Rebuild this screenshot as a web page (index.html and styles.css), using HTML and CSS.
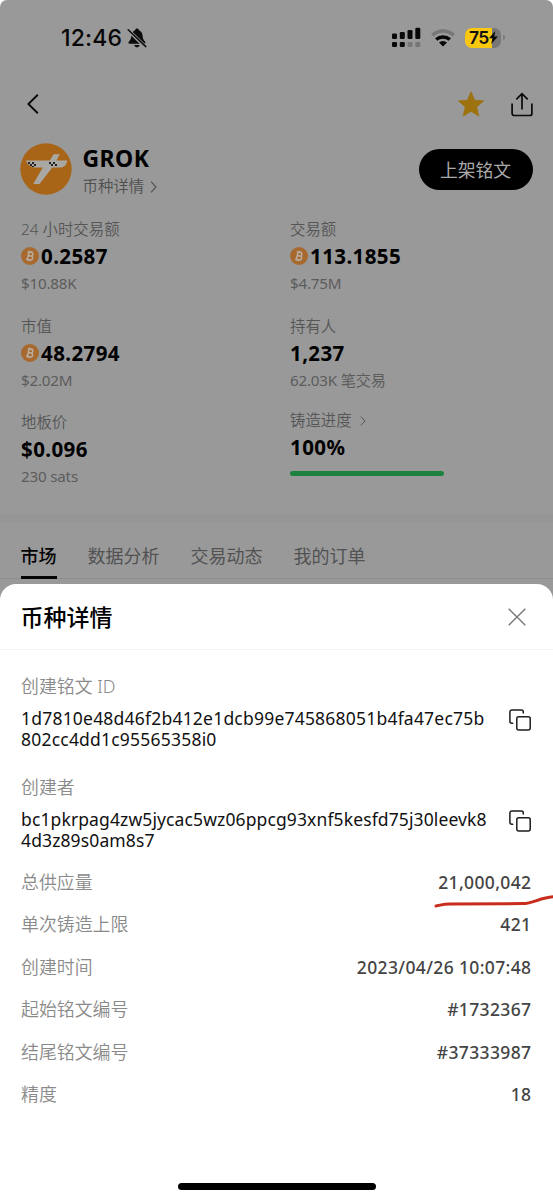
FILE: index.html
```
<!DOCTYPE html>
<html lang="zh-CN">
<head>
<meta charset="utf-8">
<title>GROK</title>
<link rel="stylesheet" href="styles.css">
</head>
<body>
<svg class="defs" width="0" height="0">
  <symbol id="btc" viewBox="0 0 18 18">
    <circle cx="9" cy="9" r="9" fill="#a7692d"/>
    <g transform="rotate(12 9 9)" fill="none" stroke="#b9aea2" stroke-width="1.5">
      <path d="M7 5.2h2.6a1.8 1.8 0 0 1 0 3.7H7.2h2.9a1.95 1.95 0 0 1 0 3.9H5.8M7.2 5.2v7.6M5.8 5.2H7"/>
      <path d="M7.9 3.6v1.6M10 3.6v1.6M7.9 12.8v1.6M10 12.8v1.6" stroke-width="1"/>
    </g>
  </symbol>
  <symbol id="copy" viewBox="0 0 24 24">
    <g fill="none" stroke="#1c1c1c" stroke-width="1.5" stroke-linecap="round" stroke-linejoin="round">
      <rect x="8.8" y="8.8" width="13.4" height="13.2" rx="2"/>
      <path d="M15.3 5V3.9a2 2 0 0 0-2-2H3.9a2 2 0 0 0-2 2v9.3a2 2 0 0 0 2 2h.8"/>
    </g>
  </symbol>
</svg>
<div class="screen">
  <header class="status">
    <div class="clock"><span class="time">12:46</span>
      <svg width="20" height="20" viewBox="0 0 20 20"><path d="M10 .6c1 0 1.8.7 1.9 1.6 2.5.9 3.6 3 3.7 5.6.1 3.6 1.400 4.600 2.500 6 .8 1 .3 1.900-.8 1.900H2.600c-1.100 0-1.600-.9-.8-1.900 1.100-1.400 2.400-2.400 2.500-6C4.400 5.200 5.600 3.100 8.100 2.200 8.200 1.300 9 .6 10 .6z" fill="#0b0b0b"/><path d="M7.300 17h5.400c-.4 1.500-1.400 2.300-2.700 2.300S7.700 18.500 7.300 17z" fill="#0b0b0b"/><path d="M.8 1.700l17.600 17.200" stroke="#999" stroke-width="3.600"/><path d="M1.200 1.800l17.600 16.800" stroke="#0b0b0b" stroke-width="1.500" stroke-linecap="round"/></svg>
    </div>
    <div class="signals">
      <svg width="29" height="21" viewBox="0 0 29 21"><g fill="#080808"><rect x="0" y="6.500" width="5" height="5.500" rx="1.300"/><rect x="7.800" y="5" width="5" height="7" rx="1.300"/><rect x="15.500" y="3" width="5" height="9" rx="1.300"/><rect x="23.300" y=".8" width="5" height="11.200" rx="1.300"/><rect x="0" y="15" width="5" height="5" rx="1.300"/><rect x="7.800" y="15" width="5" height="5" rx="1.300"/></g><g fill="#777"><rect x="15.500" y="15" width="5" height="5" rx="1.300"/><rect x="23.300" y="15" width="5" height="5" rx="1.300"/></g></svg>
      <svg class="wifi" width="24" height="18" viewBox="0 0 24 18"><g fill="none" stroke-width="3.400"><path d="M1.300 6.300a15.500 15.500 0 0 1 21.400 0" stroke="#777"/><path d="M5.200 10.600a10 10 0 0 1 13.600 0" stroke="#050505"/></g><path d="M8 13.600a5.900 5.900 0 0 1 8 0l-4 4z" fill="#050505"/></svg>
      <div class="battery"><div class="cell"><span>75</span><svg width="9" height="13" viewBox="0 0 9 13"><path d="M6.300 0L0 7.300h3.500L2.200 13 9 5.400H5.300z" fill="#080808"/></svg></div><i></i></div>
    </div>
  </header>

  <nav class="nav">
    <svg width="12" height="20" viewBox="0 0 12 20"><path d="M10.800 .8L1.400 10l9.400 9.200" fill="none" stroke="#0a0a0a" stroke-width="1.900"/></svg>
    <div class="actions">
      <svg width="26" height="26" viewBox="0 0 26 26"><path d="M13 .7l3.600 8.500 9 .7-6.900 6 2.100 9.200-7.800-4.800-7.800 4.800 2.100-9.200-6.900-6 9-.7z" fill="#9d720f" stroke="#9d720f" stroke-width=".8" stroke-linejoin="round"/></svg>
      <svg width="22" height="25" viewBox="0 0 22 25"><path d="M1.100 11.500v10a2 2 0 0 0 2 2h15.800a2 2 0 0 0 2-2v-10M11 17.500V1.700M5.300 7.300L11 1.600l5.700 5.700" fill="none" stroke="#0a0a0a" stroke-width="1.700"/></svg>
    </div>
  </nav>

  <section class="token">
    <svg width="52" height="52" viewBox="0 0 52 52"><circle cx="26" cy="26" r="25.700" fill="#a86517"/><path d="M33.500 11.200h6.300L36.400 17.500h10.800c-.8 4.600-3 7-7 7h-7.900L19.500 41h-6.300l9.600-16.500h-7c-4.700 0-8.300-2.500-9.800-7h23.800z" fill="#a9a7a4"/><g fill="#222"><path d="M8 19h2v2H8zM10 21h2v2h-2zM12 19h2v2h-2zM14 21h2v2h-2zM12 23h2v1h-2zM29 19h2v2h-2zM31 21h2v2h-2zM33 19h2v2h-2zM35 21h2v2h-2z"/></g></svg>
    <div class="token-name">
      <h1>GROK</h1>
      <a>币种详情<svg width="7" height="12" viewBox="0 0 7 12"><path d="M1 .7l5 5.300-5 5.300" fill="none" stroke="#4f4f4f" stroke-width="1.100"/></svg></a>
    </div>
    <button class="list-btn">上架铭文</button>
  </section>

  <section class="stats">
    <div class="stat"><label>24 小时交易额</label><b><svg width="18" height="18"><use href="#btc"/></svg>0.2587</b><small>$10.88K</small></div>
    <div class="stat"><label>交易额</label><b><svg width="18" height="18"><use href="#btc"/></svg>113.1855</b><small>$4.75M</small></div>
    <div class="stat"><label>市值</label><b><svg width="18" height="18"><use href="#btc"/></svg>48.2794</b><small>$2.02M</small></div>
    <div class="stat"><label>持有人</label><b>1,237</b><small>62.03K 笔交易</small></div>
    <div class="stat"><label>地板价</label><b>$0.096</b><small>230 sats</small></div>
    <div class="stat minted"><label>铸造进度<svg width="6" height="10" viewBox="0 0 6 10"><path d="M.8 .6L5 5 .8 9.400" fill="none" stroke="#555" stroke-width="1"/></svg></label><b>100%</b><div class="progress"></div></div>
  </section>

  <div class="band"></div>
  <div class="tabs"><span class="active">市场</span><span>数据分析</span><span>交易动态</span><span>我的订单</span></div>

  <main class="sheet">
    <div class="sheet-head"><h2>币种详情</h2><svg width="18" height="18" viewBox="0 0 18 18"><path d="M.7 .7l16.600 16.600M17.300 .7L.7 17.300" stroke="#777" stroke-width="1.400"/></svg></div>
    <div class="entry"><label>创建铭文 ID</label><div class="hash inscription"><div><p>1d7810e48d46f2b412e1dcb99e745868051b4fa47ec75b</p><p>802cc4dd1c95565358i0</p></div><svg width="24" height="24"><use href="#copy"/></svg></div></div>
    <div class="entry"><label>创建者</label><div class="hash creator"><div><p>bc1pkrpag4zw5jycac5wz06ppcg93xnf5kesfd75j30leevk8</p><p>4d3z89s0am8s7</p></div><svg width="24" height="24"><use href="#copy"/></svg></div></div>
    <dl class="facts">
      <div class="marked"><dt>总供应量</dt><dd>21,000,042</dd><svg class="mark" width="120" height="16" viewBox="0 0 120 16"><path d="M3 12c5-1 8-2 14-2l73-.4c10 0 17-6 30-6.800" fill="none" stroke="#c92b1c" stroke-width="3" stroke-linecap="round"/></svg></div>
      <div><dt>单次铸造上限</dt><dd>421</dd></div>
      <div><dt>创建时间</dt><dd>2023/04/26 10:07:48</dd></div>
      <div><dt>起始铭文编号</dt><dd>#1732367</dd></div>
      <div><dt>结尾铭文编号</dt><dd>#37333987</dd></div>
      <div><dt>精度</dt><dd>18</dd></div>
    </dl>
    <div class="home"></div>
  </main>
</div>
</body>
</html>
```
FILE: styles.css
```
* { box-sizing: border-box; }
body { margin: 0; background: #fff; font-family: "Noto Sans", "Noto Sans CJK SC", sans-serif; color: #000; }
h1, h2, p, dl, dd { margin: 0; }
svg { display: block; flex: none; }
.defs { position: absolute; }
.screen { width: 553px; height: 1200px; display: flex; flex-direction: column; background: #999; border-radius: 7px 7px 0 0; overflow: hidden; }

.status { height: 75px; flex: none; display: flex; justify-content: space-between; padding: 0 48px 0 61px; align-items: center; }
.clock { display: flex; align-items: center; gap: 5px; }
.time { font: 500 23px/28px Inter, sans-serif; letter-spacing: 0.2px; color: #080808; }
.signals { display: flex; align-items: center; }
.wifi { margin: 0 10px 0 10px; }
.battery { display: flex; align-items: center; gap: 2px; }
.battery i { width: 2px; height: 5px; border-radius: 0 2px 2px 0; background: #7d7d7d; }
.cell { width: 36px; height: 20px; border-radius: 7px; background: linear-gradient(90deg, #fac90f 27px, #777 27px); display: flex; align-items: center; padding-left: 4px; font: 600 17.500px/20px Inter, sans-serif; letter-spacing: -0.6px; color: #111; }

.nav { height: 58px; flex: none; display: flex; align-items: center; justify-content: space-between; padding: 0 20px 0 27px; }
.actions { display: flex; align-items: center; gap: 27px; }

.token { height: 72px; flex: none; display: flex; align-items: center; padding: 0 20px; }
.token-name { flex: 1; margin-left: 10.500px; padding-top: 6px; }
.token h1 { font-size: 23px; line-height: 29px; letter-spacing: 0.4px; }
.token a { display: flex; align-items: center; gap: 6px; font-size: 15.400px; line-height: 28px; font-weight: 350; color: #4f4f4f; }
.list-btn { width: 114px; height: 41px; margin-top: 1px; padding: 0 1px 1px 0; border: 0; border-radius: 21px; background: #000; color: #aaa; font: 400 17.800px/24px "Noto Sans CJK SC", sans-serif; }

.stats { flex: none; height: 309px; padding: 11px 0 0 21px; display: grid; grid-template-columns: 269px 1fr; grid-template-rows: repeat(3, 96.700px); }
.stat label { display: flex; align-items: center; gap: 8px; font-size: 15.400px; line-height: 28px; font-weight: 350; color: #555; }
.stat b { display: flex; align-items: center; gap: 2.500px; margin-top: -2px; margin-bottom: 1px; font-size: 20.500px; line-height: 28px; letter-spacing: 0.400px; }
.stat b svg { margin-left: -0.500px; }
.stat small { display: block; font-size: 15.200px; line-height: 25px; font-weight: 400; letter-spacing: -0.200px; color: #5c5c5c; }
.minted { margin-top: -2px; }
.progress { width: 154px; height: 5px; margin-top: 10px; border-radius: 3px; background: #1c803f; }

.band { height: 8px; flex: none; background: #959595; }
.tabs { height: 57px; flex: none; display: flex; gap: 31px; padding: 0 20.500px; border-bottom: 1px solid #8e8e8e; font-size: 18px; line-height: 69px; color: #525252; }
.tabs .active { color: #050505; font-weight: 500; border-bottom: 3px solid #050505; height: 57px; }

.sheet { flex: 1; margin-top: 5px; background: #fff; border-radius: 16px 16px 0 0; display: flex; flex-direction: column; }
.sheet-head { height: 66px; flex: none; display: flex; align-items: center; justify-content: space-between; padding: 0 27px 0 21px; border-bottom: 1px solid #f4f4f4; }
.sheet h2 { margin: -2px 0 0 -0.500px; font: 500 23px/34px "Noto Sans CJK SC", sans-serif; }
.entry { height: 100.500px; flex: none; padding: 0 21px; }
.entry label { display: block; padding-top: 22px; font-size: 17.900px; line-height: 28px; font-weight: 350; color: #8a8a8a; }
.hash { display: flex; justify-content: space-between; margin-top: 8px; align-items: flex-start; }
.hash p { font-size: 17.500px; line-height: 21px; color: #111; white-space: nowrap; }
.inscription p { letter-spacing: 0.210px; }
.creator p { letter-spacing: 0.120px; }
.facts { padding: 9.500px 22px 0 21px; }
.facts > div { height: 42.500px; display: flex; align-items: center; justify-content: space-between; font-size: 17.900px; line-height: 28px; }
.facts dt { color: #8a8a8a; font-weight: 350; }
.facts dd { font-size: 17.500px; font-weight: 500; letter-spacing: 0.360px; margin-right: -0.400px; color: #444; }
.marked { position: relative; }
.mark { position: absolute; right: -22px; top: 33px; }
.home { width: 198px; height: 7px; margin: auto auto 10px; border-radius: 4px; background: #000; }
```
